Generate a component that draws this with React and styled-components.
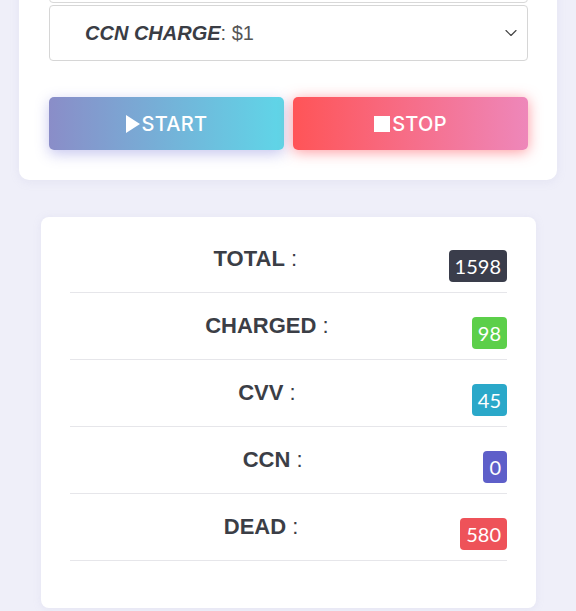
import React from 'react'
import styled, { createGlobalStyle } from 'styled-components'
import { ChevronDown } from 'lucide-react'

const GlobalStyle = createGlobalStyle`
  html, body {
    margin: 0;
    padding: 0;
    background: #efeff9;
    font-family: 'Liberation Sans', Arial, sans-serif;
  }
`

const stats = [
  { label: 'TOTAL', value: 1598, color: '#3a3d4b' },
  { label: 'CHARGED', value: 98, color: '#5ccf4a' },
  { label: 'CVV', value: 45, color: '#2aa8c9' },
  { label: 'CCN', value: 0, color: '#5e5fc9' },
  { label: 'DEAD', value: 580, color: '#ee5259' },
]

export default function App() {
  return (
    <>
      <GlobalStyle />
      <Page>
        <ControlCard>
          <ListInput />
          <SelectBox>
            <SelectText>
              <b>CCN CHARGE</b>: $1
            </SelectText>
            <ChevronDown size={20} strokeWidth={1.4} color='#444' />
          </SelectBox>
          <Actions>
            <ActionButton $variant='start'>
              <PlayIcon />
              START
            </ActionButton>
            <ActionButton $variant='stop'>
              <StopIcon />
              STOP
            </ActionButton>
          </Actions>
        </ControlCard>

        <StatsCard>
          {stats.map((s) => (
            <StatRow key={s.label}>
              <StatLabel>
                <b>{s.label}</b> :
              </StatLabel>
              <Badge $bg={s.color}>{s.value}</Badge>
            </StatRow>
          ))}
        </StatsCard>
      </Page>
    </>
  )
}

const Page = styled.div`
  display: flex;
  flex-direction: column;
  margin-top: -45px;
  padding-bottom: 10px;
`

const ControlCard = styled.div`
  margin: 0 19px;
  padding: 0 29px 30px 30px;
  background: #fff;
  border-radius: 0 0 10px 10px;
  box-shadow: 0 2px 10px rgba(170, 170, 210, 0.15);
  display: flex;
  flex-direction: column;
`

const ListInput = styled.div`
  height: 48px;
  box-sizing: border-box;
  border: 1px solid #d8d8d8;
  border-radius: 4px;
`

const SelectBox = styled.div`
  margin-top: 2px;
  height: 56px;
  box-sizing: border-box;
  border: 1px solid #d6d6d6;
  border-radius: 4px;
  display: flex;
  align-items: center;
  justify-content: space-between;
  padding: 0 6px 0 35px;
`

const SelectText = styled.div`
  font-size: 20px;
  color: #555;
  b {
    font-style: italic;
    font-weight: 700;
    color: #3a3d45;
  }
`

const Actions = styled.div`
  margin-top: 36px;
  display: grid;
  grid-template-columns: 1fr 1fr;
  gap: 9px;
`

const ActionButton = styled.button`
  height: 53px;
  border: none;
  border-radius: 5px;
  color: #fff;
  font-family: Inter, 'Liberation Sans', sans-serif;
  font-weight: 500;
  font-size: 20px;
  letter-spacing: 0.3px;
  cursor: pointer;
  display: flex;
  align-items: center;
  justify-content: center;
  gap: 2px;
  background: ${(p) =>
    p.$variant === 'start'
      ? 'linear-gradient(90deg, #8a8dc8 0%, #5fd6e8 100%)'
      : 'linear-gradient(90deg, #ff5457 0%, #ee87ba 100%)'};
  box-shadow: ${(p) =>
    p.$variant === 'start'
      ? '0 4px 14px rgba(130, 130, 220, 0.45)'
      : '0 2px 14px rgba(255, 70, 80, 0.55)'};
`

const PlayIcon = styled.span`
  width: 0;
  height: 0;
  border-left: 14px solid #fff;
  border-top: 9.5px solid transparent;
  border-bottom: 9.5px solid transparent;
`

const StopIcon = styled.span`
  width: 16px;
  height: 16px;
  background: #fff;
`

const StatsCard = styled.div`
  margin: 37px 40px 0 41px;
  padding: 9px 29px 47px;
  background: #fff;
  border-radius: 8px;
  box-shadow: 0 1px 8px rgba(170, 170, 210, 0.15);
`

const StatRow = styled.div`
  height: 67px;
  box-sizing: border-box;
  border-bottom: 1px solid #e6e6ea;
  display: flex;
  align-items: center;
`

const StatLabel = styled.div`
  flex: 1;
  text-align: center;
  padding-right: 8px;
  font-size: 22px;
  color: #3b3e46;
  b {
    font-weight: 700;
  }
`

const Badge = styled.span`
  margin-top: 14px;
  height: 32px;
  line-height: 32px;
  padding: 0 6px;
  border-radius: 4px;
  background: ${(p) => p.$bg};
  color: #fff;
  font-family: Lato, sans-serif;
  font-weight: 400;
  font-size: 20px;
`
